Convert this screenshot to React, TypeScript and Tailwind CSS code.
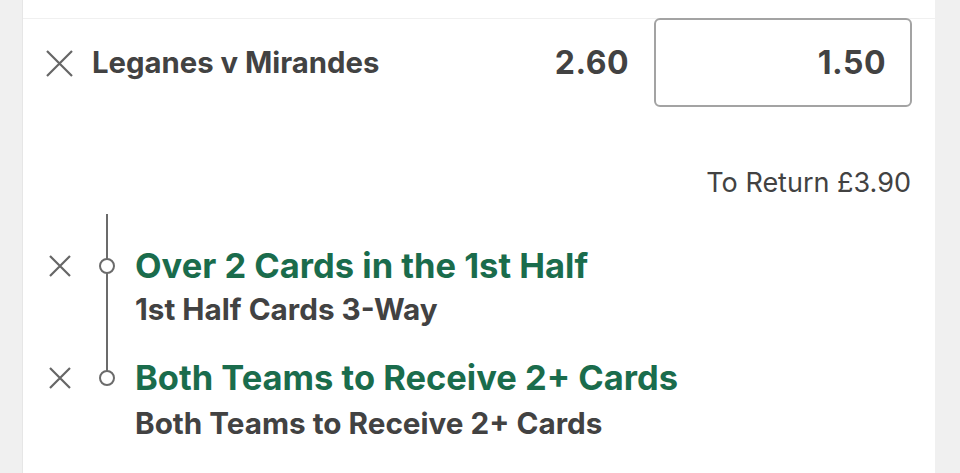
const legs = [
  { title: "Over 2 Cards in the 1st Half", market: "1st Half Cards 3-Way" },
  { title: "Both Teams to Receive 2+ Cards", market: "Both Teams to Receive 2+ Cards" },
];

function CloseIcon({ size }: { size: number }) {
  return (
    <svg width={size} height={size} viewBox={`0 0 ${size} ${size}`} className="shrink-0">
      <path d={`M1 1 L${size - 1} ${size - 1} M${size - 1} 1 L1 ${size - 1}`} stroke="#666" strokeWidth={2.2} fill="none" />
    </svg>
  );
}

export default function App() {
  return (
    <div
      className="flex h-[473px] w-[960px] overflow-hidden bg-[#f0f0f0] text-[#424242]"
      style={{ fontFamily: "Inter, 'Liberation Sans', sans-serif" }}
    >
      <div className="w-[23px] shrink-0 border-r border-[#e6e6e6]" />
      <main className="flex flex-1 flex-col bg-white">
        <div className="h-[19px] border-b border-[#f0f0f0]" />

        {/* selection row */}
        <div className="flex h-[88px] items-center pl-[23px] pr-[23px]">
          <CloseIcon size={27} />
          <span className="ml-[19px] flex-1 text-[29.3px] font-bold">Leganes v Mirandes</span>
          <span className="mr-[25px] text-[32px] font-bold tracking-[0.5px]">2.60</span>
          <div className="-mt-[1px] flex h-[89px] w-[258px] items-center justify-end rounded-[6px] border-2 border-[#a3a3a3] pr-[24px] text-[32px] font-bold tracking-[0.5px]">
            1.50
          </div>
        </div>

        <div className="mt-[62px] pr-[24px] text-right text-[27px] leading-none">To Return £3.90</div>

        {/* legs */}
        <div className="relative mt-[18px] flex flex-col">
          <div className="absolute left-[83px] top-0 h-[166px] w-[2px] bg-[#6b6b6b]" />
          {legs.map((leg, i) => (
            <div key={i} className={`grid grid-cols-[112px_1fr] ${i === 0 ? "pt-[33px]" : "pt-[34px]"}`}>
              <div className="flex h-[38px] items-center pl-[26px]">
                <CloseIcon size={22} />
                <div className="relative ml-[28px] h-[16px] w-[16px] rounded-full border-2 border-[#6b6b6b] bg-white" />
              </div>
              <span className="text-[34.5px] font-bold leading-[38px] text-[#1a6c4c]">{leg.title}</span>
              <span />
              <span className={`text-[29.7px] font-bold leading-[32px] ${i === 0 ? "mt-[8px]" : "mt-[10px]"}`}>
                {leg.market}
              </span>
            </div>
          ))}
        </div>
      </main>
      <div className="w-[25px] shrink-0" />
    </div>
  );
}
